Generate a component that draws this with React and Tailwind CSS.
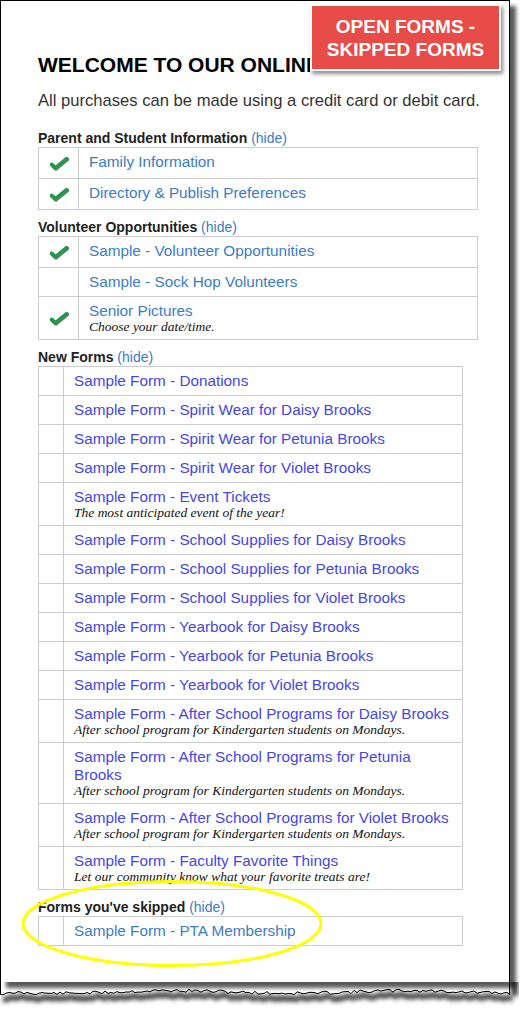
import React from 'react';

const STEEL = 'text-[#3c7cc4]';

const sections = [
  {
    title: 'Parent and Student Information',
    wide: true,
    rows: [
      { t: 'Family Information', check: true },
      { t: 'Directory & Publish Preferences', check: true },
    ],
  },
  {
    title: 'Volunteer Opportunities',
    wide: true,
    rows: [
      { t: 'Sample - Volunteer Opportunities', check: true },
      { t: 'Sample - Sock Hop Volunteers' },
      { t: 'Senior Pictures', d: 'Choose your date/time.', check: true },
    ],
  },
  {
    title: 'New Forms',
    fresh: true,
    rows: [
      { t: 'Sample Form - Donations' },
      { t: 'Sample Form - Spirit Wear for Daisy Brooks' },
      { t: 'Sample Form - Spirit Wear for Petunia Brooks' },
      { t: 'Sample Form - Spirit Wear for Violet Brooks' },
      { t: 'Sample Form - Event Tickets', d: 'The most anticipated event of the year!' },
      { t: 'Sample Form - School Supplies for Daisy Brooks' },
      { t: 'Sample Form - School Supplies for Petunia Brooks' },
      { t: 'Sample Form - School Supplies for Violet Brooks' },
      { t: 'Sample Form - Yearbook for Daisy Brooks' },
      { t: 'Sample Form - Yearbook for Petunia Brooks' },
      { t: 'Sample Form - Yearbook for Violet Brooks' },
      {
        t: 'Sample Form - After School Programs for Daisy Brooks',
        d: 'After school program for Kindergarten students on Mondays.',
      },
      {
        t: 'Sample Form - After School Programs for Petunia Brooks',
        d: 'After school program for Kindergarten students on Mondays.',
      },
      {
        t: 'Sample Form - After School Programs for Violet Brooks',
        d: 'After school program for Kindergarten students on Mondays.',
      },
      {
        t: 'Sample Form - Faculty Favorite Things',
        d: 'Let our community know what your favorite treats are!',
      },
    ],
  },
  {
    title: "Forms you've skipped",
    rows: [{ t: 'Sample Form - PTA Membership' }],
  },
];

function Check() {
  return (
    <svg width="20" height="16" viewBox="0 0 20 16">
      <path
        d="M2.5 9.2 L6.2 12.8 L17.5 3.6"
        fill="none"
        stroke="#1e4d2b"
        strokeWidth="4.2"
        strokeLinecap="round"
        strokeLinejoin="round"
        transform="translate(0.6 0.8)"
        opacity="0.7"
      />
      <path
        d="M2.5 9.2 L6.2 12.8 L17.5 3.6"
        fill="none"
        stroke="#1f9a48"
        strokeWidth="3.2"
        strokeLinecap="round"
        strokeLinejoin="round"
      />
    </svg>
  );
}

function Section({ title, rows, wide, fresh }) {
  const link = fresh ? 'text-[#4646e6]' : STEEL;
  return (
    <div className="mt-[9px] first:mt-[19px]">
      <div className="text-[14px] leading-[17px] font-bold text-[#222]">
        {title} <span className={`font-normal ${STEEL}`}>(hide)</span>
      </div>
      <div className={`border border-[#ccc] ${wide ? 'w-[440px]' : 'w-[425px]'}`}>
        {rows.map((r, i) => (
          <div key={i} className={`flex ${i > 0 ? 'border-t border-[#ccc]' : ''}`}>
            <div
              className={`flex flex-none items-center justify-center border-r border-[#ccc] ${
                wide ? 'w-[40px]' : 'w-[25px]'
              } ${r.check ? 'min-h-[30px]' : ''}`}
            >
              {r.check && <Check />}
            </div>
            <div className="flex-1 py-[5px] pl-[10px] pr-[7px]">
              <div className={`text-[15.3px] leading-[18px] ${link}`}>{r.t}</div>
              {r.d && (
                <div className="font-['Liberation_Serif',serif] italic text-[13.5px] leading-[14px] text-[#111]">
                  {r.d}
                </div>
              )}
            </div>
          </div>
        ))}
      </div>
    </div>
  );
}

function TornEdge() {
  let seed = 11;
  const rand = () => {
    seed = (seed * 9301 + 49297) % 233280;
    return seed / 233280;
  };
  const pts = [];
  for (let x = 0; x <= 510; x += 3) {
    const y = 10 + (rand() - 0.5) * 3.2 + Math.sin(x / 37) * 1.3 + (x < 14 ? 1.5 : 0);
    pts.push([x, +y.toFixed(1)]);
  }
  pts[pts.length - 1][0] = 509.5;
  const line = pts.map(([x, y]) => `${x},${y}`).join(' ');
  const shade =
    pts.map(([x, y]) => `${x + 3},${y + 2}`).join(' ') +
    ' ' +
    pts
      .slice()
      .reverse()
      .map(([x, y]) => `${x + 3},${y + 8}`)
      .join(' ');
  return (
    <svg width="526" height="30" className="block">
      <defs>
        <filter id="blur" x="-10%" y="-100%" width="120%" height="300%">
          <feGaussianBlur stdDeviation="2" />
        </filter>
      </defs>
      <rect x="0" y="0" width="526" height="30" fill="#fff" />
      <rect x="511" y="-6" width="7" height="20" fill="#444" filter="url(#blur)" />
      <polygon points={shade} fill="#444" filter="url(#blur)" />
      <polygon points={`0,0 ${line} 509.5,0`} fill="#fff" />
      <polyline
        points={`0.5,0 0.5,${pts[0][1]} ${line} 509.5,0`}
        fill="none"
        stroke="#000"
        strokeWidth="1"
      />
    </svg>
  );
}

export default function App() {
  return (
    <div className="relative w-[526px] h-[1012px] bg-white overflow-hidden font-['Liberation_Sans',Arial,sans-serif]">
      <div className="relative w-[510px] h-[982px] bg-white border-l border-t border-r border-black shadow-[6px_6px_4px_rgba(0,0,0,0.65)] overflow-hidden">
        <div className="pl-[37px] pt-[52px]">
          <h1 className="w-[272px] overflow-hidden text-[21px] leading-[24px] font-bold text-black whitespace-nowrap">
            WELCOME TO OUR ONLINE STORE
          </h1>
          <p className="mt-[14px] text-[16.6px] leading-[20px] text-[#333] whitespace-nowrap">
            All purchases can be made using a credit card or debit card.
          </p>
          <div>
            {sections.map((s) => (
              <Section key={s.title} {...s} />
            ))}
          </div>
        </div>
        <div className="absolute left-[309px] top-[3px] w-[191px] h-[67px] border-2 border-white bg-[#e84c48] shadow-[2px_3px_4px_rgba(0,0,0,0.45)] flex flex-col items-center justify-center text-white font-bold text-[19px] leading-[23px]">
          <div>OPEN FORMS -</div>
          <div>SKIPPED FORMS</div>
        </div>
      </div>
      <TornEdge />
      <svg
        className="absolute left-0 top-0 pointer-events-none"
        width="526"
        height="1012"
      >
        <ellipse cx="172" cy="923.5" rx="149" ry="42" fill="none" stroke="#ffff00" strokeWidth="3" />
      </svg>
    </div>
  );
}
